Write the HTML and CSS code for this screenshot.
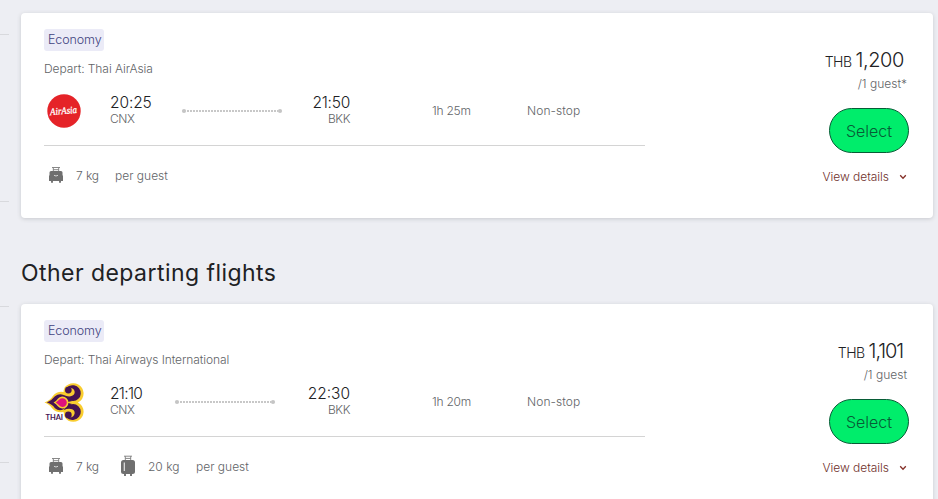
FILE: index.html
```html
<!DOCTYPE html>
<html lang="en">
<head>
<meta charset="utf-8">
<title>Departing flights</title>
<link rel="stylesheet" href="styles.css">
</head>
<body>
<svg class="defs" aria-hidden="true">
  <symbol id="cabin" viewBox="0 0 16 18">
    <path d="M4 1.5h8M5 3.7h6M5.300 1v4M10.700 1v4" fill="none" stroke="#888" stroke-width="1"/>
    <path d="M3 5h10q1.500 0 1.500 1.500V9l.5 1v4.500q0 .5-.5.5h-13q-.5 0-.5-.5V10l.5-1V6.500Q1.500 5 3 5z" fill="#6f6f6f"/>
    <path d="M4 15v1.700M12 15v1.700" stroke="#777" stroke-width="2"/>
    <path d="M6 9.300q2 1.400 4 0" fill="none" stroke="#d5d5d5" stroke-width="1"/>
  </symbol>
  <symbol id="checked" viewBox="0 0 16 22">
    <path d="M4 1.200h8M5 3.400h6M5.300 1v4M10.700 1v4" fill="none" stroke="#888" stroke-width="1"/>
    <rect x="1" y="5" width="14" height="14" rx="2.500" fill="#6f6f6f"/>
    <path d="M5 19v2M11 19v2" stroke="#777" stroke-width="2"/>
    <path d="M4.300 7.500v8.500" stroke="#e4e4e4" stroke-width="1.200"/>
  </symbol>
  <symbol id="chevron" viewBox="0 0 8 6"><path d="M1.200 1.300L4 4.200l2.800-2.900" fill="none" stroke="#842f27" stroke-width="1.300"/></symbol>
  <symbol id="route" viewBox="0 0 102 6"><path d="M6 3h91" stroke="#c8c8c8" stroke-width="2" stroke-dasharray="2 1"/><circle cx="3" cy="3" r="2.100" fill="#c5c5c5"/><circle cx="99" cy="3" r="2.100" fill="#c5c5c5"/></symbol>
</svg>
<div class="page">
  <aside class="rail"><i></i><i></i><i></i><i></i></aside>
  <main class="results">
    <div class="edge"></div>
    <section class="card">
      <div class="trip">
        <span class="chip">Economy</span>
        <p class="airline a1">Depart: Thai AirAsia</p>
        <div class="flight">
          <svg class="logo" viewBox="0 0 42 42"><circle cx="20" cy="20" r="16.700" fill="#e52328"/><text class="script" x="6" y="23" textLength="27" lengthAdjust="spacingAndGlyphs" transform="rotate(-5 20 20)">AirAsia</text></svg>
          <div class="stop"><b class="t1">20:25</b><span class="code">CNX</span></div>
          <svg class="route"><use href="#route"/></svg>
          <div class="stop end"><b class="t2">21:50</b><span class="code">BKK</span></div>
          <span class="time">1h 25m</span><span class="nonstop">Non-stop</span>
        </div>
        <div class="bags"><svg class="cabin"><use href="#cabin"/></svg><span class="kg">7 kg</span><span class="per">per guest</span></div>
      </div>
      <div class="buy">
        <div class="price"><small>THB</small><span class="n1">1,200</span></div>
        <div class="guest">/1 guest*</div>
        <button class="select">Select</button>
        <a class="details"><span>View details</span><svg><use href="#chevron"/></svg></a>
      </div>
    </section>
    <h2>Other departing flights</h2>
    <section class="card">
      <div class="trip">
        <span class="chip">Economy</span>
        <p class="airline a2">Depart: Thai Airways International</p>
        <div class="flight">
          <svg class="logo" viewBox="-.5 -1.500 44 44">
            <path d="M0 20Q6 18 9 13Q13 8 20 9Q20 3 25 1A11 11 0 0 1 41 10Q41 17 35 20Q41 23 41 30A11 11 0 0 1 25 39Q20 36 20 30Q12 31 8 26Q5 21.500 0 20Z" fill="#f9cd2f"/>
            <path d="M2.500 20Q8 17.500 11 13.500Q15 10 20 12Q24 16 29 18.500Q24 19.500 24 20Q24 20.500 29 21.500Q24 24 20 27Q15 29.500 11 26Q8 21.500 2.500 20Z" fill="#451352"/>
            <path id="swirl" d="M20 12Q24 18.500 30 18.500A8.300 8.300 0 0 0 31 2Q26 1 23 4.500Q29 3.500 31 7Q33 11 29 13Q25 14.500 20 12Z" fill="#451352"/>
            <circle cx="25" cy="7" r="3.500" fill="#451352"/>
            <use href="#swirl" transform="matrix(1 0 0 -1 0 40)"/>
            <circle cx="25" cy="33" r="3.500" fill="#451352"/>
            <path d="M9.500 20Q12.500 18.500 14 16A6.300 6.300 0 1 1 14 24Q12.500 21.500 9.500 20Z" fill="#f9cd2f"/>
            <path d="M11.800 20Q14 18.500 15.500 16.800A4.600 4.600 0 1 1 15.500 23.200Q14 21.500 11.800 20Z" fill="#df127d"/>
            <path d="M0 31H20V39H0Z" fill="#fff"/>
            <text class="thai" x="1" y="38" textLength="18.500" lengthAdjust="spacingAndGlyphs">THAI</text>
          </svg>
          <div class="stop"><b class="t3">21:10</b><span class="code">CNX</span></div>
          <svg class="route early"><use href="#route"/></svg>
          <div class="stop end"><b class="t4">22:30</b><span class="code">BKK</span></div>
          <span class="time">1h 20m</span><span class="nonstop">Non-stop</span>
        </div>
        <div class="bags"><svg class="cabin"><use href="#cabin"/></svg><span class="kg">7 kg</span><svg class="checked"><use href="#checked"/></svg><span class="kg20">20 kg</span><span class="per">per guest</span></div>
      </div>
      <div class="buy">
        <div class="price"><small>THB</small><span class="n2">1,101</span></div>
        <div class="guest">/1 guest</div>
        <button class="select">Select</button>
        <a class="details"><span>View details</span><svg><use href="#chevron"/></svg></a>
      </div>
    </section>
  </main>
</div>
</body>
</html>
```
FILE: styles.css
```css
* { box-sizing: border-box; }
body { margin: 0; background: #edeef3; font: 300 12px/16px Inter, sans-serif; color: #626467; overflow: hidden; }
.defs { position: absolute; width: 0; height: 0; }
.page { display: flex; height: 499px; overflow: hidden; }
.rail { width: 9px; margin-right: 12px; flex: none; padding-top: 34px; }
.rail i { display: block; height: 1px; background: #d8d9dd; margin-bottom: 166px; }
.rail i:nth-child(2) { margin-bottom: 104px; }
.rail i:nth-child(3) { margin-bottom: 155px; }
.results { width: 912px; flex: none; }
.edge { height: 0; margin-bottom: 13px; box-shadow: 0 0 4px #c8c9ce; }
.card { height: 205px; display: flex; justify-content: space-between; padding: 16px 24px 0 23px; background: #fff; border-radius: 4px; box-shadow: 0 1px 4px #c8c9ce; white-space: nowrap; }
.trip { width: 601px; }
.chip { display: block; width: 60px; height: 22px; padding-left: 4px; border-radius: 3px; background: #ebebf7; color: #41437f; line-height: 22px; font-size: 12.5px; letter-spacing: -.1px; }
.airline { margin: 10px 0 0; height: 16px; }
.a1 { letter-spacing: -.07px; }
.a2 { letter-spacing: -.09px; }
.flight { display: flex; height: 69px; border-bottom: 1px solid #d4d4d4; padding-top: 14px; }
.logo { width: 42px; height: 42px; flex: none; overflow: visible; }
.script { font: italic 400 10px "Liberation Serif", serif; fill: #fff; stroke: #fff; stroke-width: .3px; }
.thai { font: 700 8px Lato, sans-serif; fill: #451352; }
.stop { width: 56px; margin-left: 24px; display: flex; flex-direction: column; padding-top: 4px; }
.stop b { font-size: 15.5px; font-weight: 300; line-height: 16px; color: #202124; white-space: nowrap; }
.t1 { letter-spacing: -.1px; }
.t2 { letter-spacing: -.25px; }
.t3 { letter-spacing: -.7px; }
.code { line-height: 16px; letter-spacing: -.4px; }
.route { width: 102px; height: 6px; margin: 17px 26px 0 15px; flex: none; }
.route.early { margin: 17px 33px 0 8px; }
.end { width: 42px; margin-left: 0; align-items: flex-end; padding-right: 1px; }
.time { width: 95px; margin: 12px 0 0 81px; letter-spacing: -.25px; }
.nonstop { margin-top: 12px; letter-spacing: .08px; }
.bags { display: flex; align-items: center; height: 60px; padding-left: 4px; }
.cabin { width: 16px; height: 18px; margin: -3px 12px 0 0; }
.kg { width: 39px; letter-spacing: -.1px; }
.checked { width: 16px; height: 22px; margin: -3px 12px 0 5px; }
.kg20 { width: 48px; }
.buy { width: 110px; padding-top: 21px; display: flex; flex-direction: column; align-items: flex-end; }
.price { height: 22px; line-height: 22px; margin-top: -1px; margin-bottom: 1px; color: #202124; display: flex; align-items: baseline; gap: 4px; padding-right: 5px; }
.price small { font-size: 14px; letter-spacing: -.5px; }
.price span { font-size: 20px; letter-spacing: -.4px; }
.price .n2 { letter-spacing: -1.1px; padding-right: 1px; }
.guest { margin-top: 4px; height: 16px; padding-right: 2px; }
.select { width: 80px; height: 45px; margin: 16px 0 0; padding: 0; border: 1px solid #075c36; border-radius: 23px; background: #00ed6b; color: #075c36; font: 300 16px Inter, sans-serif; }
.details { display: flex; align-items: center; margin: 16px 2px 0 0; color: #6f302b; letter-spacing: -.05px; }
.details svg { width: 8px; height: 6px; margin-left: 10px; }
h2 { height: 86px; margin: 0; padding-top: 39px; font: 400 23px/32px Inter, sans-serif; letter-spacing: .45px; color: #202124; }
```
